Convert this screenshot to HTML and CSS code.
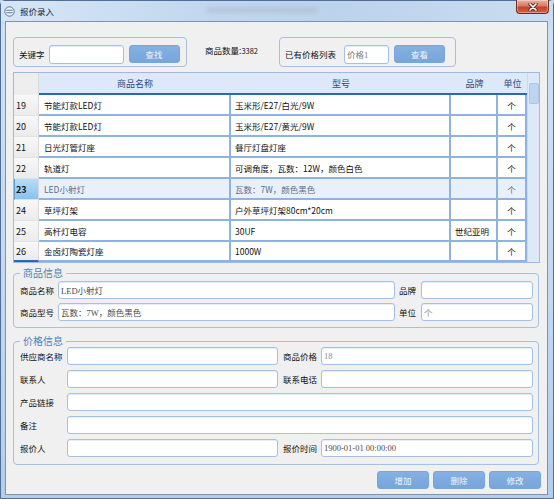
FILE: index.html
```html
<!DOCTYPE html>
<html lang="zh-CN">
<head>
  <meta charset="UTF-8">
  <title>报价录入</title>
  <link rel="stylesheet" href="styles.css">
</head>
<body>
  <div class="window" id="quote_entry">
    <div class="titlebar">
      <svg class="app-icon" width="11" height="11" viewBox="0 0 11 11">
        <circle cx="5.5" cy="5.5" r="4.7" fill="#eef4fa" stroke="#55789f" stroke-width="1"/>
        <path d="M2.3 4.2H8.7M2.3 6.8H8.7" stroke="#55789f" stroke-width="1.1"/>
      </svg>
      <span class="title">报价录入</span>
      <div class="title-glass"></div>
      <button class="close-btn" type="button">
        <svg width="10" height="8" viewBox="0 0 10 8">
          <path d="M2 1L8 7M8 1L2 7" stroke="#5a2118" stroke-width="3.2" stroke-linecap="round"/>
          <path d="M2 1L8 7M8 1L2 7" stroke="#ffffff" stroke-width="1.7" stroke-linecap="round"/>
        </svg>
      </button>
    </div>

    <div class="client">
      <div class="toolbar">
        <div class="group search-group">
          <span class="label">关键字</span>
          <input class="text-input kw-input" type="text" value="">
          <button class="btn" type="button">查找</button>
        </div>
        <div class="count">商品数量:<span class="count-num">3382</span></div>
        <div class="group price-group">
          <span class="label">已有价格列表</span>
          <input class="text-input list-input" type="text" value="价格1">
          <button class="btn" type="button">查看</button>
        </div>
      </div>

      <div class="grid">
        <div class="grid-main">
          <div class="grid-head">
            <div class="head-corner"></div>
            <div class="head-cell">商品名称</div>
            <div class="head-cell">型号</div>
            <div class="head-cell">品牌</div>
            <div class="head-cell">单位</div>
          </div>
          <div class="grid-body">
            <div class="grid-row">
              <div class="row-num">19</div>
              <div class="cell">节能灯款LED灯</div>
              <div class="cell">玉米形/E27/白光/9W</div>
              <div class="cell"></div>
              <div class="cell cell-unit">个</div>
            </div>
            <div class="grid-row">
              <div class="row-num">20</div>
              <div class="cell">节能灯款LED灯</div>
              <div class="cell">玉米形/E27/黄光/9W</div>
              <div class="cell"></div>
              <div class="cell cell-unit">个</div>
            </div>
            <div class="grid-row">
              <div class="row-num">21</div>
              <div class="cell">日光灯管灯座</div>
              <div class="cell">餐厅灯盘灯座</div>
              <div class="cell"></div>
              <div class="cell cell-unit">个</div>
            </div>
            <div class="grid-row">
              <div class="row-num">22</div>
              <div class="cell">轨道灯</div>
              <div class="cell">可调角度，瓦数：12W，颜色白色</div>
              <div class="cell"></div>
              <div class="cell cell-unit">个</div>
            </div>
            <div class="grid-row selected">
              <div class="row-num">23</div>
              <div class="cell">LED小射灯</div>
              <div class="cell">瓦数：7W，颜色黑色</div>
              <div class="cell"></div>
              <div class="cell cell-unit">个</div>
            </div>
            <div class="grid-row">
              <div class="row-num">24</div>
              <div class="cell">草坪灯架</div>
              <div class="cell">户外草坪灯架80cm*20cm</div>
              <div class="cell"></div>
              <div class="cell cell-unit">个</div>
            </div>
            <div class="grid-row">
              <div class="row-num">25</div>
              <div class="cell">高杆灯电容</div>
              <div class="cell">30UF</div>
              <div class="cell">世纪亚明</div>
              <div class="cell cell-unit">个</div>
            </div>
            <div class="grid-row partial">
              <div class="row-num current">26</div>
              <div class="cell">金卤灯陶瓷灯座</div>
              <div class="cell">1000W</div>
              <div class="cell"></div>
              <div class="cell cell-unit">个</div>
            </div>
          </div>
        </div>
        <div class="scrollbar"><div class="scroll-thumb"></div></div>
      </div>

      <fieldset class="groupbox goods-box">
        <legend>商品信息</legend>
        <div class="form-grid goods-grid">
          <label class="label">商品名称</label>
          <input class="text-input" type="text" value="LED小射灯">
          <label class="label label-right">品牌</label>
          <input class="text-input" type="text" value="">
          <label class="label">商品型号</label>
          <input class="text-input" type="text" value="瓦数：7W，颜色黑色">
          <label class="label label-right">单位</label>
          <input class="text-input muted" type="text" value="个">
        </div>
      </fieldset>

      <fieldset class="groupbox price-box">
        <legend>价格信息</legend>
        <div class="form-grid price-grid">
          <label class="label">供应商名称</label>
          <input class="text-input" type="text" value="">
          <label class="label label-right">商品价格</label>
          <input class="text-input muted" type="text" value="18">
          <label class="label">联系人</label>
          <input class="text-input" type="text" value="">
          <label class="label label-right">联系电话</label>
          <input class="text-input" type="text" value="">
          <label class="label">产品链接</label>
          <input class="text-input span-3" type="text" value="">
          <label class="label">备注</label>
          <input class="text-input span-3" type="text" value="">
          <label class="label">报价人</label>
          <input class="text-input" type="text" value="">
          <label class="label label-right">报价时间</label>
          <input class="text-input" type="text" value="1900-01-01 00:00:00">
        </div>
      </fieldset>

      <div class="actions">
        <button class="btn btn-action" type="button">增加</button>
        <button class="btn btn-action" type="button">删除</button>
        <button class="btn btn-action" type="button">修改</button>
      </div>
    </div>
  </div>
</body>
</html>
```

FILE: styles.css
```css
/* Window frame */
* {
  box-sizing: border-box;
}

html, body {
  margin: 0;
  padding: 0;
}

body {
  width: 554px;
  height: 499px;
  overflow: hidden;
  background: #c4d9f0;
  font-family: "Noto Sans CJK SC", sans-serif;
  font-size: 8.5px;
  color: #111;
}

#quote_entry {
  width: 554px;
  height: 499px;
  display: flex;
  flex-direction: column;
  border: 1px solid #4f6f99;
  border-radius: 5px 5px 0 0;
  background: linear-gradient(to bottom, #c0d6ee 0, #cfe0f3 30px, #c3d8ef 60%, #b4cdea 100%);
}

#quote_entry .titlebar {
  height: 20px;
  display: flex;
  align-items: center;
  padding-left: 3px;
  background: linear-gradient(100deg, #d7e6f5 0, #c3d8ef 35%, #bcd3ec 60%, #cadcf1 100%);
}

#quote_entry .title {
  margin-left: 5px;
  font-size: 8.5px;
  color: #1e2430;
}

#quote_entry .title-glass {
  width: 112px;
  height: 6px;
  margin-left: 152px;
  margin-top: -2px;
  border-radius: 3px;
  background: #a9b8c9;
  opacity: 0.55;
  filter: blur(2px);
}

#quote_entry .close-btn {
  align-self: flex-start;
  margin: -1px 4px 0 auto;
  width: 33px;
  height: 14px;
  padding: 0;
  display: flex;
  align-items: center;
  justify-content: center;
  border: 1px solid #6e2b20;
  border-top: 0;
  border-radius: 0 0 4px 4px;
  background: linear-gradient(to bottom, #eab0a2 0, #d97a64 45%, #c4442c 55%, #d0613f 100%);
  box-shadow: inset 0 0 0 1px rgba(255, 255, 255, 0.35);
}

/* Client area */
#quote_entry .client {
  flex: 1;
  margin: 0 5px 3px 4px;
  padding: 15px 0 0 7px;
  border: 1px solid #8193ab;
  background: #f0f0f0;
  display: flex;
  flex-direction: column;
}

#quote_entry .toolbar {
  display: flex;
  align-items: center;
  height: 30px;
}

#quote_entry .group {
  height: 30px;
  display: flex;
  align-items: center;
  padding: 5px 6px 1px 5px;
  border: 1px solid #a7c0e1;
  border-radius: 4px;
}

#quote_entry .search-group {
  width: 174px;
}

#quote_entry .price-group {
  width: 177px;
}

#quote_entry .label {
  font-size: 8.5px;
  color: #111;
  white-space: nowrap;
}

#quote_entry .count {
  width: 74px;
  margin-left: 18px;
  margin-top: -4px;
  font-size: 8.5px;
  white-space: nowrap;
}

#quote_entry .count-num {
  font-size: 7.5px;
}

#quote_entry .text-input {
  height: 18px;
  width: 100%;
  padding: 0 2px;
  border: 1px solid #a5c0e5;
  border-radius: 3px;
  background: #fff;
  outline: 0;
  font-family: "Liberation Serif", "Noto Sans CJK SC", serif;
  font-size: 8.5px;
  color: #4a4a4a;
  box-shadow: inset 0 1px 0 #e6eef9;
}

#quote_entry .text-input.muted {
  color: #8a8a8a;
}

#quote_entry .kw-input {
  width: 75px;
  height: 19px;
  margin-left: 4px;
}

#quote_entry .list-input {
  width: 45px;
  height: 19px;
  margin-left: 8px;
  color: #7a7a7a;
}

#quote_entry .btn {
  width: 51px;
  height: 18px;
  margin-left: 5px;
  padding: 0;
  border: 1px solid #78a5da;
  border-radius: 3px;
  background: linear-gradient(to bottom, #85b0e1, #77a6db);
  font-family: "Noto Sans CJK SC", sans-serif;
  font-size: 8.5px;
  color: #eef4fb;
}

/* Data grid */
#quote_entry .grid {
  width: 527px;
  height: 191px;
  margin-top: 5px;
  display: flex;
  border: 1px solid #9dbbe2;
  background: #fff;
}

#quote_entry .grid-main {
  width: 513px;
  display: flex;
  flex-direction: column;
}

#quote_entry .grid-head,
#quote_entry .grid-row {
  display: grid;
  grid-template-columns: 25px 192px 220px 47px 29px;
}

#quote_entry .grid-head {
  height: 22px;
  background: #dde9f8;
}

#quote_entry .head-corner {
  background: #eeeeee;
  border-right: 1px solid #dadada;
}

#quote_entry .head-cell {
  display: flex;
  align-items: center;
  justify-content: center;
  border-bottom: 2px solid #2d66b3;
  font-size: 9px;
  color: #2d4c7c;
}

#quote_entry .grid-body {
  height: 167px;
  overflow: hidden;
}

#quote_entry .grid-row {
  height: 21px;
}

#quote_entry .grid-row.partial {
  height: 20px;
}

#quote_entry .row-num {
  display: flex;
  align-items: center;
  padding-left: 2px;
  background: linear-gradient(to bottom, #f8f8f8, #ebebeb);
  border-right: 1px solid #d8d8d8;
  border-bottom: 1px solid #e2e2e2;
  font-size: 9px;
  color: #111;
}

#quote_entry .row-num.current {
  border-bottom: 2px solid #2d66b3;
}

#quote_entry .cell {
  display: flex;
  align-items: center;
  padding-left: 5px;
  overflow: hidden;
  white-space: nowrap;
  border-right: 2px solid #8eb3e1;
  border-bottom: 2px solid #8eb3e1;
  background: #fff;
  font-size: 8.5px;
  color: #111;
}

#quote_entry .cell + .cell {
  padding-left: 4px;
}

#quote_entry .cell-unit {
  justify-content: center;
  padding-left: 0 !important;
}

#quote_entry .grid-row.selected .cell {
  background: #e8f0fb;
  color: #5b6d8a;
}

#quote_entry .grid-row.selected .row-num {
  background: linear-gradient(to bottom, #b6ddf9, #86c3f0);
  border-left: 1px solid #5d9fd8;
  padding-left: 1px;
  font-weight: bold;
}

#quote_entry .scrollbar {
  width: 12px;
  background: #dde9f8;
  border-left: 1px solid #c9dbf1;
}

#quote_entry .scroll-thumb {
  height: 21px;
  margin: 10px 0 0 1px;
  width: 10px;
  border: 1px solid #adc7ea;
  border-radius: 2px;
  background: #bed4f0;
}

/* Group boxes */
#quote_entry .groupbox {
  width: 526px;
  min-width: 0;
  margin: 4px 0 0 0;
  padding: 2px 5px 6px 6px;
  border: 1px solid #a6c0e2;
  border-radius: 4px;
}

#quote_entry .groupbox legend {
  padding: 0 3px;
  font-size: 10px;
  line-height: 12px;
  color: #4f7fbf;
}

#quote_entry .price-box {
  margin-top: 7px;
  padding: 0 5px 7px 6px;
}

#quote_entry .form-grid {
  display: grid;
  align-items: center;
}

#quote_entry .goods-grid {
  grid-template-columns: 38px 337px 26px 112px;
  grid-auto-rows: 18px;
  row-gap: 4px;
}

#quote_entry .goods-grid .label-right {
  padding-left: 4px;
}

#quote_entry .price-grid {
  grid-template-columns: 47px 211px 43px 212px;
  grid-auto-rows: 18px;
  row-gap: 5px;
}

#quote_entry .price-grid .label-right {
  padding-left: 5px;
}

#quote_entry .span-3 {
  grid-column: span 3;
}

/* Bottom buttons */
#quote_entry .actions {
  display: flex;
  justify-content: flex-end;
  gap: 4px;
  margin: 6px 6px 0 0;
}

#quote_entry .btn-action {
  width: 52px;
  height: 18px;
  margin-left: 0;
}
```
